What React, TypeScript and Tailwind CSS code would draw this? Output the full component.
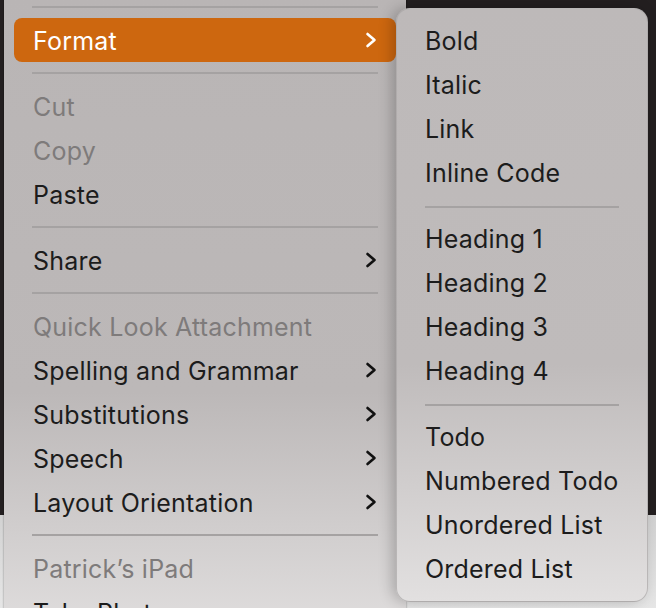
type Item =
  | { kind: "sep" }
  | { kind: "item"; label: string; disabled?: boolean; sub?: boolean; active?: boolean };

const MAIN: Item[] = [
  { kind: "sep" },
  { kind: "item", label: "Format", sub: true, active: true },
  { kind: "sep" },
  { kind: "item", label: "Cut", disabled: true },
  { kind: "item", label: "Copy", disabled: true },
  { kind: "item", label: "Paste" },
  { kind: "sep" },
  { kind: "item", label: "Share", sub: true },
  { kind: "sep" },
  { kind: "item", label: "Quick Look Attachment", disabled: true },
  { kind: "item", label: "Spelling and Grammar", sub: true },
  { kind: "item", label: "Substitutions", sub: true },
  { kind: "item", label: "Speech", sub: true },
  { kind: "item", label: "Layout Orientation", sub: true },
  { kind: "sep" },
  { kind: "item", label: "Patrick\u2019s iPad", disabled: true },
  { kind: "item", label: "Take Photo" },
];

const FORMAT: Item[] = [
  { kind: "item", label: "Bold" },
  { kind: "item", label: "Italic" },
  { kind: "item", label: "Link" },
  { kind: "item", label: "Inline Code" },
  { kind: "sep" },
  { kind: "item", label: "Heading 1" },
  { kind: "item", label: "Heading 2" },
  { kind: "item", label: "Heading 3" },
  { kind: "item", label: "Heading 4" },
  { kind: "sep" },
  { kind: "item", label: "Todo" },
  { kind: "item", label: "Numbered Todo" },
  { kind: "item", label: "Unordered List" },
  { kind: "item", label: "Ordered List" },
];

function Chevron({ white }: { white?: boolean }) {
  return (
    <svg width="12" height="16" viewBox="0 0 12 16" className="shrink-0">
      <path
        d="M2.5 2 L9.5 8 L2.5 14"
        fill="none"
        stroke={white ? "#ffffff" : "#111111"}
        strokeWidth="2.6"
        strokeLinecap="round"
        strokeLinejoin="round"
      />
    </svg>
  );
}

function MenuRows({ items, sub }: { items: Item[]; sub?: boolean }) {
  return (
    <>
      {items.map((it, i) => {
        if (it.kind === "sep") {
          return (
            <div
              key={i}
              className={`h-[22px] flex items-center ${sub ? "px-[28px]" : "px-[18px]"}`}
            >
              <div className="h-[2px] w-full bg-[#a5a2a2]" />
            </div>
          );
        }
        return (
          <div
            key={i}
            className={`h-[44px] flex items-center justify-between rounded-[8px] ${
              sub ? "px-[28px]" : "pl-[19px] pr-[19px]"
            } ${it.active ? "bg-[#cd670f] text-white" : it.disabled ? "text-[#7e7b7b]" : "text-[#1c1c1c]"}`}
          >
            <span
              className={`text-[25px] leading-none tracking-[0.2px] ${sub ? "pb-[1px]" : "pt-[3px]"}`}
            >
              {it.label}
            </span>
            {it.sub && <Chevron white={it.active} />}
          </div>
        );
      })}
    </>
  );
}

export default function App() {
  return (
    <div
      className="relative w-[656px] h-[608px] overflow-hidden"
      style={{ fontFamily: "Inter, 'Noto Sans', sans-serif" }}
    >
      {/* desktop behind the menus */}
      <div className="absolute inset-0 flex flex-col">
        <div className="h-[515px] bg-[#231f20]" />
        <div className="flex-1 bg-gradient-to-b from-[#d2d2d2] to-[#e6e6e6]" />
      </div>

      {/* context menu */}
      <div className="absolute left-[4px] top-[-4px] w-[402px] h-[660px] px-[10px] bg-gradient-to-b from-[#b9b5b5] via-[#bcb8b8] via-60% to-[#e4e2e2] shadow-[0_0_2px_rgba(0,0,0,0.4)]">
        <MenuRows items={MAIN} />
      </div>

      {/* Format submenu */}
      <div className="absolute left-[396px] top-[8px] w-[252px] pt-[11px] pb-[9px] rounded-[14px] border border-[#a9a6a6]/70 bg-gradient-to-b from-[#bdb9b9] via-[#bfbbbb] via-60% to-[#e2e0e0] shadow-[-4px_0_14px_rgba(0,0,0,0.22)]">
        <MenuRows items={FORMAT} sub />
      </div>
    </div>
  );
}
